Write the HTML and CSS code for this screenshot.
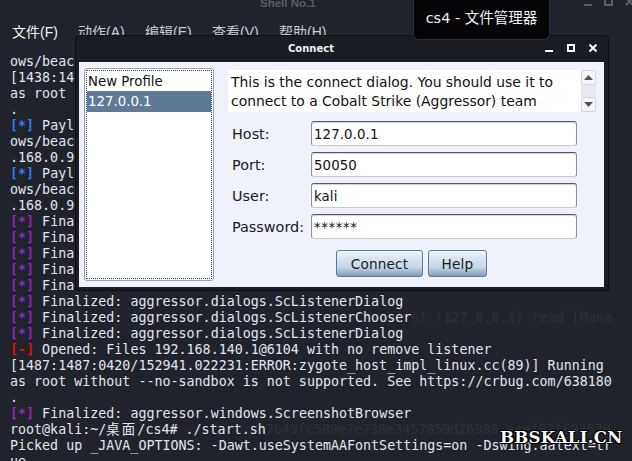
FILE: index.html
```html
<!DOCTYPE html>
<html lang="zh">
<head>
<meta charset="utf-8">
<title>Shell No.1</title>
<link rel="stylesheet" href="styles.css">
</head>
<body>
<div class="term">
  <header class="titlebar">
    <span class="wintitle">Shell No.1</span>
    <span class="winbtns">
      <svg width="50" height="12" viewBox="0 0 50 12"><path d="M0 8h8" stroke="#5c5f68" stroke-width="2"/><rect x="21" y="1" width="7" height="7" fill="none" stroke="#5c5f68" stroke-width="2"/><path d="M42 1l7 7M49 1l-7 7" stroke="#5c5f68" stroke-width="2"/></svg>
    </span>
  </header>
  <nav class="menu">
    <span class="menu-first">文件(F)</span>
    <span class="menu-item m1">动作(A)</span>
    <span class="menu-item m2">编辑(E)</span>
    <span class="menu-item m3">查看(V)</span>
    <span class="menu-item m4">帮助(H)</span>
  </nav>
  <pre class="log">ows/beacon
[1438:1438:0420/152000.000000:ERROR
as root
.
<span class="b">[<i>*</i>]</span> Payload
ows/beacon
.168.0.9
<span class="b">[<i>*</i>]</span> Payload
ows/beacon
.168.0.9
<span class="p">[<i>*</i>]</span> Finalized
<span class="p">[<i>*</i>]</span> Finalized
<span class="p">[<i>*</i>]</span> Finalized
<span class="p">[<i>*</i>]</span> Finalized
<span class="p">[<i>*</i>]</span> Finalized
<span class="p">[<i>*</i>]</span> Finalized: aggressor.dialogs.ScListenerDialog
<span class="p">[<i>*</i>]</span> Finalized: aggressor.dialogs.ScListenerChooser<span class="ghost">nt (127.0.0.1) read [Mana</span>
<span class="p">[<i>*</i>]</span> Finalized: aggressor.dialogs.ScListenerDialog
<span class="r">[<i>-</i>]</span> Opened: Files 192.168.140.1@6104 with no remove listener
[1487:1487:0420/152941.022231:ERROR:zygote_host_impl_linux.cc(89)] Running
as root without --no-sandbox is not supported. See https://crbug.com/638180
.
<span class="p">[<i>*</i>]</span> Finalized: aggressor.windows.ScreenshotBrowser
root@kali:~/<span class="cjk">桌面</span>/cs4# ./start.sh<span class="ghost">7b49fc589e7e738e3457859d26999 ecef82f693570</span>
Picked up _JAVA_OPTIONS: -Dawt.useSystemAAFontSettings=on -Dswing.aatext=tr
ue</pre>
</div>

<div class="tooltip">cs4 - 文件管理器</div>

<section class="dialog">
  <div class="dlg-title">
    <span class="dlg-name">Connect</span>
    <svg class="dlg-btns" width="53" height="9" viewBox="0 0 53 9"><path d="M0 7h8" stroke="#fff" stroke-width="2"/><rect x="23" y="1" width="6" height="6" fill="none" stroke="#fff" stroke-width="2"/><path d="M44.500 .5l7 7M51.500 .5l-7 7" stroke="#fff" stroke-width="2"/></svg>
  </div>
  <div class="dlg-body">
    <div class="list">
      <div class="list-inner">
        <div class="item">New Profile</div>
        <div class="item selected">127.0.0.1</div>
      </div>
    </div>
    <div class="pane">
      <div class="info">
        <p class="info-text">This is the connect dialog. You should use it to<br>connect to a Cobalt Strike (Aggressor) team</p>
        <div class="scroll">
          <span class="sbtn"><svg width="9" height="5" viewBox="0 0 9 5"><path d="M4.500 0L9 5H0z" fill="#555"/></svg></span>
          <span class="strack"></span>
          <span class="sbtn"><svg width="9" height="5" viewBox="0 0 9 5"><path d="M0 0h9L4.500 5z" fill="#555"/></svg></span>
        </div>
      </div>
      <div class="form">
        <label class="lbl">Host:</label><div class="field">127.0.0.1</div>
        <label class="lbl">Port:</label><div class="field">50050</div>
        <label class="lbl">User:</label><div class="field">kali</div>
        <label class="lbl">Password:</label><div class="field pw">******</div>
      </div>
      <div class="actions">
        <button class="btn btn-connect">Connect</button>
        <button class="btn btn-help">Help</button>
      </div>
    </div>
  </div>
</section>

<div class="mark">BBSKALI.CN</div>
</body>
</html>
```
FILE: styles.css
```css
html, body {
  margin: 0;
  padding: 0;
  width: 632px;
  height: 461px;
  overflow: hidden;
  background: #21232c;
}
body { position: relative; }

.term {
  height: 461px;
  overflow: hidden;
  display: flex;
  flex-direction: column;
  color: #dfe3ea;
}

.titlebar {
  height: 11px;
  display: flex;
  justify-content: space-between;
  align-items: center;
  overflow: hidden;
  padding: 0 0 0 260px;
  flex: none;
}
.wintitle {
  font: bold 11.5px/11px "Liberation Sans", sans-serif;
  color: #5a5d66;
  margin-top: -4px;
}
.winbtns { display: flex; margin-top: -6px; margin-right: -2px; }

.menu {
  height: 43px;
  flex: none;
  display: flex;
  align-items: flex-start;
  padding: 12px 0 0 12px;
  box-sizing: border-box;
  font: 14px/18px "Liberation Sans", "Noto Sans CJK SC", sans-serif;
}
.menu-first { color: #f2f3f5; width: 66px; }
.menu-item { color: #c9ccd2; width: 67px; }

.log {
  margin: 0;
  padding: 0 0 0 10px;
  font: 13.33px/16px "DejaVu Sans Mono", "Noto Sans CJK SC", monospace;
  white-space: pre;
  color: #e3e6ec;
}
.log i { font-style: normal; font-weight: bold; }
.b { color: #2f7fe8; font-weight: bold; }
.p { color: #8a2cb4; font-weight: bold; }
.r { color: #e01010; font-weight: bold; }
.ghost { color: #2e3039; }
.cjk { letter-spacing: 2.2px; }

.tooltip {
  position: absolute;
  left: 413px;
  top: 0;
  width: 137px;
  height: 40px;
  box-sizing: border-box;
  padding-top: 9px;
  text-align: center;
  background: #050507;
  border: 1px solid #2a2c33;
  border-top: 0;
  border-radius: 0 0 6px 6px;
  color: #f0f2f5;
  font: 14.5px/18px "DejaVu Sans", "Noto Sans CJK SC", sans-serif;
  z-index: 3;
}

.dialog {
  position: absolute;
  left: 75px;
  top: 35px;
  width: 534px;
  height: 256px;
  box-sizing: border-box;
  padding: 0 4px 3px 3px;
  background: #1a1c24;
  border: 1px solid #0e0f13;
  border-radius: 4px 4px 0 0;
  z-index: 2;
  display: flex;
  flex-direction: column;
  font: 13.33px/17px "DejaVu Sans", sans-serif;
  color: #111;
}
.dlg-title {
  height: 26px;
  flex: none;
  position: relative;
  display: flex;
  align-items: center;
  padding-left: 209px;
}
.dlg-name {
  color: #f0f1f3;
  font: bold 10px/14px "DejaVu Sans", sans-serif;
}
.dlg-btns { position: absolute; right: 6px; top: 8px; }

.dlg-body {
  flex: 1;
  display: flex;
  background: #eff2fa;
  padding: 6px 0 0 5px;
  min-height: 0;
}

.list {
  width: 130px;
  height: 213px;
  box-sizing: border-box;
  padding: 1px;
  background: #fff;
  border: 1px solid #9a9fa8;
  border-radius: 3px;
  flex: none;
}
.list-inner {
  height: 100%;
  box-sizing: border-box;
  border: 1px dotted #2f4a6a;
  padding-top: 1px;
}
.item { height: 19px; padding-left: 1px; line-height: 19px; white-space: nowrap; }
.selected { height: 21px; line-height: 21px; background: #5f7a96; color: #fff; }

.pane {
  margin-left: 14px;
  width: 368px;
  padding-top: 2px;
}
.info {
  height: 42px;
  display: flex;
  background: #fff;
}
.info-text {
  margin: 0;
  flex: 1;
  padding: 3px 0 0 3px;
  font-size: 13.9px;
  line-height: 19px;
  white-space: nowrap;
}
.scroll {
  width: 15px;
  display: flex;
  flex-direction: column;
  background: #eef0f4;
}
.sbtn {
  height: 15px;
  display: flex;
  align-items: center;
  justify-content: center;
  background: #f4f5f8;
  border: 1px solid #d4d6dc;
  border-radius: 2px;
  box-sizing: border-box;
}
.strack { flex: 1; background: #e8e9ee; }

.form {
  margin-top: 9px;
  display: grid;
  grid-template-columns: 83px 266px;
  grid-auto-rows: 25px;
  row-gap: 6px;
  align-items: center;
}
.lbl { padding: 1px 0 0 4px; color: #1a1a1a; font-size: 14.4px; }
.field {
  height: 25px;
  box-sizing: border-box;
  background: #fff;
  border: 1px solid #8b8f96;
  border-top-color: #55585e;
  border-bottom-color: #c8cad0;
  border-radius: 3px;
  box-shadow: inset 0 1px 1px #d0d2d6;
  padding: 1px 2px 0;
  line-height: 24px;
  letter-spacing: 0.1px;
}
.pw { font-size: 13.33px; line-height: 23px; letter-spacing: 0.6px; }

.actions {
  margin-top: 11px;
  padding-left: 108px;
  display: flex;
  gap: 5px;
}
.btn {
  height: 27px;
  padding: 1px 0 0;
  border: 1px solid #5d7b96;
  border-radius: 3px;
  background: linear-gradient(#f0f5fa 0%, #d5e2ee 35%, #c6d6e6 65%, #7f9dba 100%);
  font: 13.6px/17px "DejaVu Sans", sans-serif;
  color: #1a1a1a;
  letter-spacing: 0.2px;
}
.btn-connect { width: 87px; }
.btn-help { width: 59px; }

.mark {
  position: absolute;
  left: 500px;
  top: 428px;
  font: bold 16.5px/20px "DejaVu Serif", serif;
  letter-spacing: 0.3px;
  color: #fff;
  text-shadow: 1px 1px 0 #000, -1px -1px 0 #000, 1px -1px 0 #000, -1px 1px 0 #000;
  z-index: 4;
}
```
